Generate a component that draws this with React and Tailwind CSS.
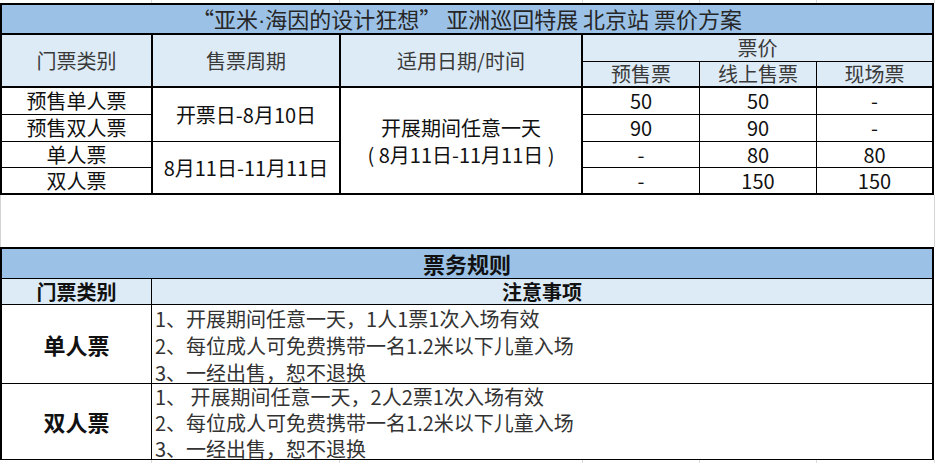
import React from "react";

const head = "bg-[#ddebf7] text-[#3a3a3a] flex items-center justify-center";
const cell = "flex items-center justify-center text-[#111]";

const prices = [
  ["预售单人票", "50", "50", "-"],
  ["预售双人票", "90", "90", "-"],
  ["单人票", "-", "80", "80"],
  ["双人票", "-", "150", "150"],
];

const rules = [
  {
    name: "单人票",
    lines: [
      "1、开展期间任意一天，1人1票1次入场有效",
      "2、每位成人可免费携带一名1.2米以下儿童入场",
      "3、一经出售，恕不退换",
    ],
    leading: "leading-[27px]",
  },
  {
    name: "双人票",
    lines: [
      "1、 开展期间任意一天，2人2票1次入场有效",
      "2、每位成人可免费携带一名1.2米以下儿童入场",
      "3、一经出售，恕不退换",
    ],
    leading: "leading-[26px]",
  },
];

const GridStrip = ({ height }) => (
  <div className={`flex ${height}`}>
    <div className="w-[152px] border-r border-[#dadada]" />
    <div className="w-[188px] border-r border-[#dadada]" />
    <div className="w-[243px] border-r border-[#dadada]" />
    <div className="w-[117px] border-r border-[#dadada]" />
    <div className="w-[117px] border-r border-[#dadada]" />
    <div className="w-[118px] border-r border-[#dadada]" />
  </div>
);

const PriceTable = () => (
  <div className="grid w-[934px] grid-cols-[151px_188px_242px_117px_117px_117px] grid-rows-[30px_27px_26px_27px_27px_26px_27px] border-l-2 border-t-2 border-black text-[20px]">
    <div className="col-span-6 flex items-center justify-center border-b-2 border-r-2 border-black bg-[#9bc2e6] text-[22px] text-[#262626]">
      <span>
        “亚米<span className="font-['Liberation_Sans']">·</span>海因的设计狂想” 亚洲巡回特展 北京站 票价方案
      </span>
    </div>

    <div className={`${head} row-span-2 border-b-2 border-r-2 border-black`}>门票类别</div>
    <div className={`${head} row-span-2 border-b-2 border-r-2 border-black`}>售票周期</div>
    <div className={`${head} row-span-2 border-b-2 border-r-2 border-black`}>适用日期/时间</div>
    <div className={`${head} col-span-3 border-b border-r-2 border-black`}>票价</div>
    <div className={`${head} border-b-2 border-r border-black`}>预售票</div>
    <div className={`${head} border-b-2 border-r border-black`}>线上售票</div>
    <div className={`${head} border-b-2 border-r-2 border-black`}>现场票</div>

    {prices.map((row, i) => {
      const last = i === prices.length - 1;
      const bb = last ? "border-b-2" : "border-b";
      return (
        <React.Fragment key={row[0]}>
          <div className={`${cell} ${bb} border-r-2 border-black`}>{row[0]}</div>
          {i === 0 && (
            <div className={`${cell} row-span-2 border-b border-r-2 border-black`}>
              开票日-8月10日
            </div>
          )}
          {i === 0 && (
            <div className={`${cell} row-span-4 flex-col border-b-2 border-r-2 border-black leading-[27px]`}>
              <span>开展期间任意一天</span>
              <span>( 8月11日-11月11日 )</span>
            </div>
          )}
          {i === 2 && (
            <div className={`${cell} row-span-2 border-b-2 border-r-2 border-black`}>
              8月11日-11月11日
            </div>
          )}
          <div className={`${cell} ${bb} border-r border-black`}>{row[1]}</div>
          <div className={`${cell} ${bb} border-r border-black`}>{row[2]}</div>
          <div className={`${cell} ${bb} border-r-2 border-black`}>{row[3]}</div>
        </React.Fragment>
      );
    })}
  </div>
);

const RuleTable = () => (
  <div className="grid w-[934px] grid-cols-[150px_782px] grid-rows-[30px_26px_79px_76px] border-l-2 border-t-2 border-black text-[20px]">
    <div className="col-span-2 flex items-center justify-center border-b border-r-2 border-black bg-[#9bc2e6] text-[22px] font-bold text-[#111]">
      票务规则
    </div>
    <div className="flex items-center justify-center border-b border-r border-black bg-[#ddebf7] font-bold text-[#111]">
      门票类别
    </div>
    <div className="flex items-center justify-center border-b border-r-2 border-black bg-[#ddebf7] font-bold text-[#111]">
      注意事项
    </div>
    {rules.map((r) => (
      <React.Fragment key={r.name}>
        <div className="flex items-center justify-center border-b border-r border-black text-[22px] font-bold text-[#111]">
          {r.name}
        </div>
        <div className={`flex flex-col border-b border-r-2 border-black pl-[3px] text-[#333] ${r.leading}`}>
          {r.lines.map((l) => (
            <div key={l}>{l}</div>
          ))}
        </div>
      </React.Fragment>
    ))}
  </div>
);

export default function App() {
  return (
    <div
      className="h-[463px] w-[936px] overflow-hidden bg-white"
      style={{ fontFamily: '"Noto Sans CJK SC", "Noto Sans", sans-serif' }}
    >
      <GridStrip height="h-[3px]" />
      <PriceTable />
      <div className="h-[52px] w-[935px] border-l border-r border-[#d4d4d4]" />
      <RuleTable />
      <GridStrip height="h-[4px]" />
    </div>
  );
}
